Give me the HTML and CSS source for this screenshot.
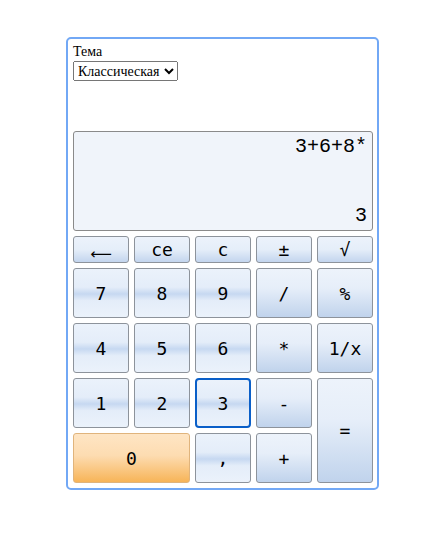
FILE: index.html
```html
<!DOCTYPE html>
<html lang="ru">
<head>
<meta charset="utf-8">
<title>Калькулятор</title>
<link rel="stylesheet" href="styles.css">
</head>
<body>
<div class="calc">
  <div class="theme">
    <label class="theme-label" for="theme">Тема</label>
    <select id="theme" class="theme-select">
      <option>Классическая</option>
    </select>
  </div>
  <div class="display">
    <div class="expr">3+6+8*</div>
    <div class="result">3</div>
  </div>
  <div class="keys">
    <button class="key top"><span class="arrow">⟵</span></button>
    <button class="key top">ce</button>
    <button class="key top">c</button>
    <button class="key top">±</button>
    <button class="key top">√</button>

    <button class="key num">7</button>
    <button class="key num">8</button>
    <button class="key num">9</button>
    <button class="key op">/</button>
    <button class="key op">%</button>

    <button class="key num">4</button>
    <button class="key num">5</button>
    <button class="key num">6</button>
    <button class="key op">*</button>
    <button class="key op">1/x</button>

    <button class="key num">1</button>
    <button class="key num">2</button>
    <button class="key num focus">3</button>
    <button class="key op">-</button>
    <button class="key op eq">=</button>

    <button class="key zero">0</button>
    <button class="key num">,</button>
    <button class="key op">+</button>
  </div>
</div>
</body>
</html>
```
FILE: styles.css
```css
html, body {
  margin: 0;
  padding: 0;
  background: #ffffff;
}

body {
  padding-top: 37px;
  padding-left: 66px;
}

.calc {
  width: 300px;
  padding: 5px 4px 5px 5px;
  border: 2px solid #72a8f5;
  border-radius: 5px;
  background: #ffffff;
}

.theme {
  display: flex;
  flex-direction: column;
  align-items: flex-start;
  height: 87px;
}

.theme-label {
  font: 14px/16px "Liberation Serif", serif;
  color: #000;
}

.theme-select {
  margin-top: 1px;
  height: 20px;
  width: 105px;
  font: 14px "Liberation Serif", serif;
  color: #000;
}

.display {
  box-sizing: border-box;
  height: 100px;
  border: 1px solid #8a8a8a;
  border-radius: 3px;
  background: #f0f4fa;
  display: flex;
  flex-direction: column;
  justify-content: space-between;
  align-items: flex-end;
  padding: 3px 5px 3px 5px;
  font: 20px/23px "Liberation Mono", monospace;
  color: #000;
}

.keys {
  margin-top: 5px;
  display: grid;
  grid-template-columns: repeat(5, 56px);
  grid-template-rows: 27px repeat(4, 50px);
  gap: 5px 5px;
}

.key {
  box-sizing: border-box;
  margin: 0;
  padding: 0;
  border: 1px solid #8d939b;
  border-radius: 3px;
  font: 18px "DejaVu Sans Mono", monospace;
  color: #000;
  background: linear-gradient(to bottom, #ecf2fb 0%, #e5eef9 50%, #c3d5ee 100%);
}

.key.top {
  font-size: 18px;
  line-height: 25px;
}

.arrow {
  font: 15px "DejaVu Sans", sans-serif;
  vertical-align: -3px;
}

.key.num {
  background: linear-gradient(to bottom, #ebf2fb 0%, #e4edf9 38%, #c6d8f1 52%, #e4edf9 66%, #ebf2fb 100%);
}

.key.op {
  background: linear-gradient(to bottom, #edf3fb 0%, #e6eef9 40%, #c0d3ec 100%);
}

.key.eq {
  grid-row: span 2;
}

.key.zero {
  grid-column: span 2;
  border-color: #e0b47c;
  background: linear-gradient(to bottom, #fee5c4 0%, #fddcb1 45%, #f7b458 100%);
}

.key.focus {
  border: 2px solid #0a5fc8;
  border-radius: 4px;
}
```
